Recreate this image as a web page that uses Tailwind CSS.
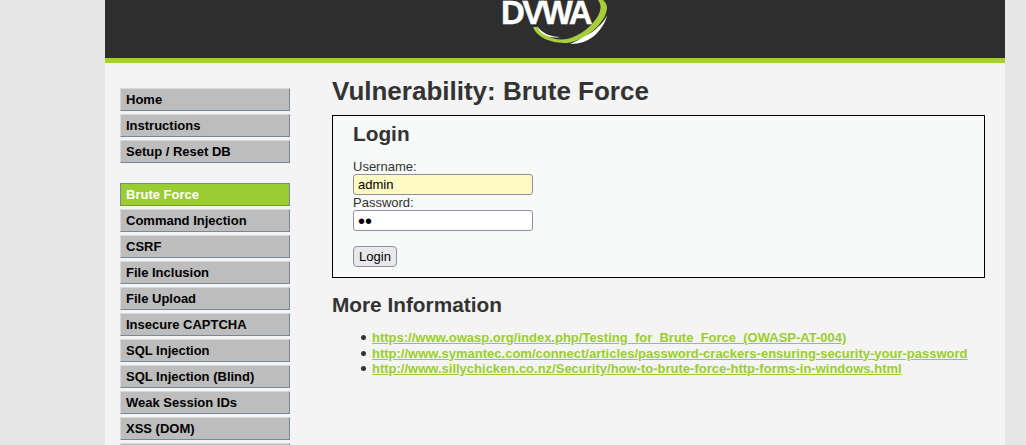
<!DOCTYPE html>
<html lang="en">

<head>
    <meta charset="UTF-8">
    <meta name="viewport" content="width=device-width, initial-scale=1.0">
    <title>Vulnerability: Brute Force</title>
    <script src="https://cdn.jsdelivr.net/npm/@tailwindcss/browser@4"></script>
</head>

<body class="h-[445px] overflow-hidden bg-[#e7e7e7] font-['Liberation_Sans',Arial,sans-serif] text-[13px] text-[#333]">
    <div class="ml-[105px] h-[445px] w-[900px] overflow-hidden bg-[#f4f4f4]">

        <!-- Header -->
        <div class="relative h-[63px] border-b-[5px] border-[#a6ce39] bg-[#2e2e2e]">
            <div class="absolute left-[395px] top-[-7px] h-[52px] w-[115px]">
                <svg class="absolute left-0 top-0" width="115" height="52" viewBox="0 0 115 52">
                    <path d="M33 34C38 46 52 50 67 50C85 48 106 30 107 15C107 11 105 9 103 7L98 7C101 11 101 15 100 18C97 28 84 42 67 46C53 48 42 42 37 34Z" fill="#a6ce39" />
                    <path d="M37 33C42 40 50 44 60 44C50 46 40 42 37 33Z" fill="#fff" />
                    <path d="M70 51C80 51 88 48 94 43C100 38 106 29 107 22C104 29 100 32 97 35C93 39 89 41 85 43C80 46 75 49 70 51Z" fill="#fff" />
                </svg>
                <span class="absolute left-[1px] top-[1px] text-[33px] leading-[37px] font-bold tracking-[-2.5px] text-white [-webkit-text-stroke:0.4px_white]">DVWA</span>
            </div>
        </div>

        <div class="flex">
            <!-- Menu -->
            <div class="ml-[15px] mt-[25px] flex w-[170px] flex-col gap-5">
                <ul class="flex flex-col gap-[3px] font-bold text-black">
                    <li class="h-[23px] border border-t-[#d8d8d8] border-r-[#7a869e] border-b-[#7a869e] border-l-[#d8d8d8] bg-[#bdbdbd] pl-[5px] leading-[21px]">Home</li>
                    <li class="h-[23px] border border-t-[#d8d8d8] border-r-[#7a869e] border-b-[#7a869e] border-l-[#d8d8d8] bg-[#bdbdbd] pl-[5px] leading-[21px]">Instructions</li>
                    <li class="h-[23px] border border-t-[#d8d8d8] border-r-[#7a869e] border-b-[#7a869e] border-l-[#d8d8d8] bg-[#bdbdbd] pl-[5px] leading-[21px]">Setup / Reset DB</li>
                </ul>
                <ul class="flex flex-col gap-[3px] font-bold text-black">
                    <li class="h-[23px] border border-[#7a869e] bg-[#9acd32] pl-[5px] leading-[21px] text-white">Brute Force</li>
                    <li class="h-[23px] border border-t-[#d8d8d8] border-r-[#7a869e] border-b-[#7a869e] border-l-[#d8d8d8] bg-[#bdbdbd] pl-[5px] leading-[21px]">Command Injection</li>
                    <li class="h-[23px] border border-t-[#d8d8d8] border-r-[#7a869e] border-b-[#7a869e] border-l-[#d8d8d8] bg-[#bdbdbd] pl-[5px] leading-[21px]">CSRF</li>
                    <li class="h-[23px] border border-t-[#d8d8d8] border-r-[#7a869e] border-b-[#7a869e] border-l-[#d8d8d8] bg-[#bdbdbd] pl-[5px] leading-[21px]">File Inclusion</li>
                    <li class="h-[23px] border border-t-[#d8d8d8] border-r-[#7a869e] border-b-[#7a869e] border-l-[#d8d8d8] bg-[#bdbdbd] pl-[5px] leading-[21px]">File Upload</li>
                    <li class="h-[23px] border border-t-[#d8d8d8] border-r-[#7a869e] border-b-[#7a869e] border-l-[#d8d8d8] bg-[#bdbdbd] pl-[5px] leading-[21px]">Insecure CAPTCHA</li>
                    <li class="h-[23px] border border-t-[#d8d8d8] border-r-[#7a869e] border-b-[#7a869e] border-l-[#d8d8d8] bg-[#bdbdbd] pl-[5px] leading-[21px]">SQL Injection</li>
                    <li class="h-[23px] border border-t-[#d8d8d8] border-r-[#7a869e] border-b-[#7a869e] border-l-[#d8d8d8] bg-[#bdbdbd] pl-[5px] leading-[21px]">SQL Injection (Blind)</li>
                    <li class="h-[23px] border border-t-[#d8d8d8] border-r-[#7a869e] border-b-[#7a869e] border-l-[#d8d8d8] bg-[#bdbdbd] pl-[5px] leading-[21px]">Weak Session IDs</li>
                    <li class="h-[23px] border border-t-[#d8d8d8] border-r-[#7a869e] border-b-[#7a869e] border-l-[#d8d8d8] bg-[#bdbdbd] pl-[5px] leading-[21px]">XSS (DOM)</li>
                    <li class="h-[23px] border border-t-[#d8d8d8] border-r-[#7a869e] border-b-[#7a869e] border-l-[#d8d8d8] bg-[#bdbdbd] pl-[5px] leading-[21px]">XSS (Reflected)</li>
                </ul>
            </div>

            <!-- Body -->
            <div class="ml-[42px] w-[653px]">
                <h1 class="mt-[13px] text-[26px] leading-[30px] font-bold">Vulnerability: Brute Force</h1>

                <div class="mt-[9px] h-[163px] border border-black bg-[#f8f9f9] pl-5">
                    <h2 class="mt-[5px] text-[20.8px] leading-[25px] font-bold">Login</h2>
                    <form class="mt-[13px]">
                        <label class="block leading-[15px]">Username:</label>
                        <input type="text" value="admin" class="block h-[21px] w-[180px] rounded-[3px] border border-[#8f8f9d] bg-[#fff9c4] px-[4px] text-[13px] text-black">
                        <label class="block leading-[15px]">Password:</label>
                        <input type="password" value="ab" class="block h-[21px] w-[180px] rounded-[3px] border border-[#8f8f9d] bg-white px-[4px] text-[20px] text-black">
                        <button type="button" class="mt-[15px] block h-[21px] w-[44px] rounded-[4px] border border-[#8f8f9d] bg-[#e9e9ed] text-[13px] text-black">Login</button>
                    </form>
                </div>

                <h2 class="mt-[14px] text-[20.8px] leading-[25px] font-bold">More Information</h2>
                <ul class="mt-[13px] ml-[29px] font-bold">
                    <li class="flex items-center gap-[6px] leading-[15.5px]"><span class="h-[5px] w-[5px] rounded-full bg-[#333]"></span><a href="#" class="text-[#9acd32] underline">https://www.owasp.org/index.php/Testing_for_Brute_Force_(OWASP-AT-004)</a></li>
                    <li class="flex items-center gap-[6px] leading-[15.5px]"><span class="h-[5px] w-[5px] rounded-full bg-[#333]"></span><a href="#" class="text-[#9acd32] underline">http://www.symantec.com/connect/articles/password-crackers-ensuring-security-your-password</a></li>
                    <li class="flex items-center gap-[6px] leading-[15.5px]"><span class="h-[5px] w-[5px] rounded-full bg-[#333]"></span><a href="#" class="text-[#9acd32] underline">http://www.sillychicken.co.nz/Security/how-to-brute-force-http-forms-in-windows.html</a></li>
                </ul>
            </div>
        </div>
    </div>
</body>

</html>
